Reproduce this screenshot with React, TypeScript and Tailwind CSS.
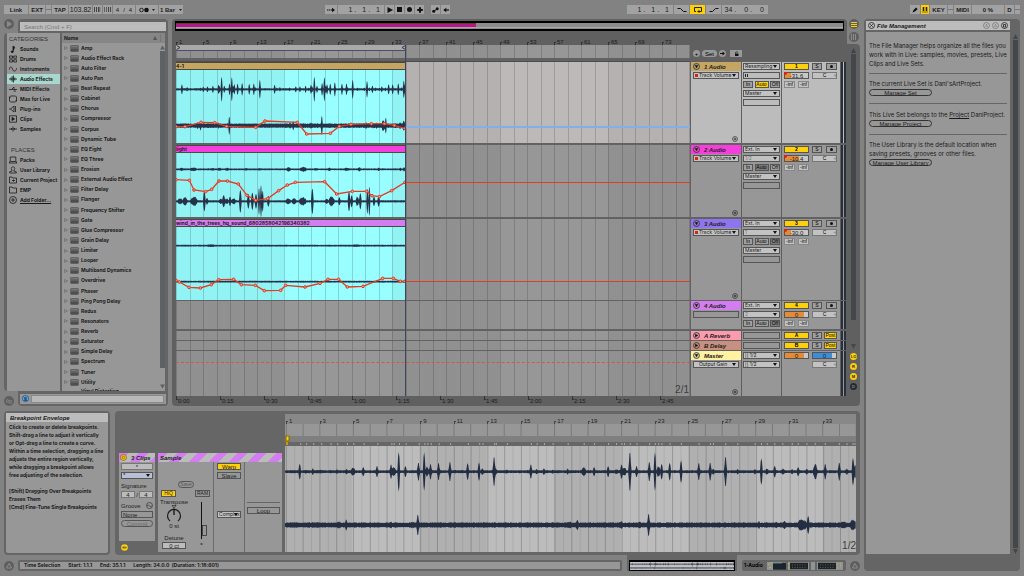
import React from "react";

type Pt = [number, number];
type Spike = [number, number, number?];

/* ---------- data ---------- */

const CATEGORIES = ["Sounds", "Drums", "Instruments", "Audio Effects", "MIDI Effects", "Max for Live", "Plug-ins", "Clips", "Samples"];
const PLACES = ["Packs", "User Library", "Current Project", "EMP", "Add Folder..."];
const DEVICES = [
  "Amp", "Audio Effect Rack", "Auto Filter", "Auto Pan", "Beat Repeat", "Cabinet", "Chorus", "Compressor", "Corpus",
  "Dynamic Tube", "EQ Eight", "EQ Three", "Erosion", "External Audio Effect", "Filter Delay", "Flanger",
  "Frequency Shifter", "Gate", "Glue Compressor", "Grain Delay", "Limiter", "Looper", "Multiband Dynamics", "Overdrive",
  "Phaser", "Ping Pong Delay", "Redux", "Resonators", "Reverb", "Saturator", "Simple Delay", "Spectrum", "Tuner", "Utility",
];
const BARS = Array.from({ length: 19 }, (_, i) => 1 + i * 4);
const TIMES = ["0:00", "0:15", "0:30", "0:45", "1:00", "1:15", "1:30", "1:45", "2:00", "2:15", "2:30", "2:45"];
const CLIP_BARS = Array.from({ length: 17 }, (_, i) => 1 + i * 2);

const EDIT_W = 1707;
const HITS: Spike[] = [
  [44, 24], [62, 6], [83, 10], [107, 6], [135, 5], [155, 7], [184, 8], [203, 13, 8], [234, 14], [275, 17], [317, 22], [324, 15, 8],
  [340, 60], [360, 17], [399, 28], [416, 58], [425, 15, 7], [435, 24], [459, 27], [493, 30], [546, 26], [580, 28], [590, 10],
  [625, 45], [630, 10, 7], [663, 6], [735, 22], [752, 8], [774, 10], [800, 6], [845, 9], [893, 14, 8], [924, 14], [966, 17],
  [990, 8, 8], [1006, 22], [1014, 14, 8], [1031, 60], [1051, 17], [1089, 30], [1106, 58], [1116, 16, 7], [1126, 24], [1150, 27],
  [1184, 34], [1237, 27], [1271, 28], [1280, 9], [1317, 46], [1353, 8], [1405, 8], [1424, 40], [1441, 9, 6], [1464, 18],
  [1488, 9, 6], [1516, 8], [1534, 14], [1560, 9], [1585, 24, 8], [1615, 24], [1657, 28], [1680, 9, 8], [1698, 42], [1704, 20, 9],
];
const BED: Spike[] = [
  [34, 8], [160, 11, 12], [183, 17], [316, 11, 6], [380, 9, 30], [397, 32], [470, 8, 60], [590, 8, 60], [660, 8], [724, 8],
  [850, 10, 12], [874, 16], [1006, 11, 6], [1060, 9, 30], [1087, 34], [1170, 8, 40], [1300, 8, 50], [1417, 12], [1468, 10],
  [1494, 11, 8], [1546, 18, 18], [1564, 28], [1670, 12, 14], [1698, 17, 12],
];
const LIGHT_TOP: Spike[] = [[16, 5, 9], [52, 6, 14], [110, 4, 8], [130, 5, 8], [153, 5, 8], [210, 4, 10], [250, 4, 8], [338, 8, 7], [382, 7, 14], [420, 4, 10], [460, 5, 6], [512, 5, 10], [550, 6, 7], [608, 5], [673, 5], [684, 6]];
const LIGHT_LOW: Spike[] = [
  [12, 10, 9], [27, 12, 9], [54, 15, 13], [85, 30], [93, 10], [134, 8, 7], [143, 18, 5], [152, 9, 7], [162, 14], [173, 10, 8],
  [193, 34], [217, 22], [229, 26], [240, 22], [249, 40, 3], [255, 48, 3], [260, 32, 3], [277, 16], [337, 10, 9], [354, 10, 9],
  [380, 12, 14], [409, 38], [452, 8, 7], [467, 16, 10], [490, 12], [519, 30], [527, 18], [544, 14, 6], [553, 24], [574, 38, 3], [580, 44, 3], [594, 14], [608, 16],
];

const AUTO_1: Pt[] = [[0, 170], [27, 170], [75, 157], [116, 158], [152, 169], [239, 172], [267, 153], [364, 157], [392, 192], [463, 190], [490, 169], [525, 163], [586, 161], [625, 161], [655, 166], [687, 175]];
const AUTO_2: Pt[] = [[0, 80], [40, 82], [54, 111], [89, 116], [107, 109], [129, 84], [154, 84], [187, 93], [213, 127], [239, 142], [275, 137], [308, 113], [334, 96], [358, 88], [446, 86], [482, 123], [529, 115], [572, 115], [588, 128], [610, 131], [647, 113], [687, 88]];
const AUTO_3: Pt[] = [[0, 160], [10, 165], [39, 181], [73, 183], [106, 173], [128, 158], [173, 157], [196, 173], [238, 175], [265, 191], [314, 190], [329, 175], [387, 180], [432, 169], [456, 157], [488, 157], [514, 180], [561, 178], [620, 154], [652, 154], [673, 163], [687, 163]];

/* ---------- drawing helpers ---------- */

function envelope(width: number, mid: number, base: number, spikes: Spike[], step = 2) {
  const top: string[] = [];
  const bottom: string[] = [];
  for (let x = 0; x <= width; x += step) {
    const n = Math.abs(Math.sin(x * 12.9898) * 43758.5453) % 1;
    let a = base * (0.8 + 0.4 * n);
    for (const [sx, amp, w = 4] of spikes) {
      const d = Math.abs(x - sx);
      if (d < w) a = Math.max(a, amp * (1 - (d / w) ** 2) * (w > 5 ? 0.7 + 0.4 * n : 1));
    }
    top.push(`${x},${(mid - a).toFixed(1)}`);
    bottom.unshift(`${x},${(mid + a).toFixed(1)}`);
  }
  return `M${top.join("L")}L${bottom.join("L")}Z`;
}

const scaled = (s: Spike[], kx: number, ky: number): Spike[] => s.map(([x, a, w = 4]) => [x * kx, a * ky, Math.max(3, w * kx)]);
const K = 687 / EDIT_W;

function Automation({ points }: { points: Pt[] }) {
  return (
    <g fill="none" stroke="#e23c22">
      <polyline points={points.map((p) => p.join(",")).join(" ")} strokeWidth="4" />
      {points.map(([x, y]) => <circle key={x} cx={x} cy={y} r="4" fill="#e8a08c" strokeWidth="3" />)}
    </g>
  );
}

const GRID =
  "bg-[repeating-linear-gradient(90deg,rgba(0,0,0,.16)_0_1px,transparent_1px_14px,rgba(0,0,0,.16)_14px_15px,transparent_15px_27px),repeating-linear-gradient(90deg,rgba(0,0,0,.045)_0_108px,transparent_108px_216px)]";
const STRIPES = "bg-[repeating-linear-gradient(135deg,#d37df0_0_7px,#bcbcbc_7px_14px)]";
const SMALL = "font-['Inter','Liberation_Sans',sans-serif] text-[5px]";

/* ---------- small controls ---------- */

const cell = "flex h-[7px] items-center justify-center border border-[#555] text-[5px] leading-none overflow-hidden whitespace-nowrap";

function Select({ label, value, className = "bg-[#c2c2c2]", dim = false, dot = false }: { label: string; value: string; className?: string; dim?: boolean; dot?: boolean }) {
  return (
    <span className={`relative flex h-[7px] items-center border border-[#555] ${className}`}>
      {dot && <i className="ml-px size-[3px] shrink-0 bg-[#e02010]" />}
      <select aria-label={label} className={`h-full w-full min-w-0 appearance-none bg-transparent pl-px leading-none ${SMALL} ${dim ? "text-[#777]" : "text-[#222]"}`}>
        <option>{value}</option>
      </select>
      <svg className="pointer-events-none absolute right-0.5 h-[3px] w-1" viewBox="0 0 4 3"><path d="M0 0h4L2 3z" fill="#111" /></svg>
    </span>
  );
}

function Top({ label, children, className = "" }: { label?: string; children?: React.ReactNode; className?: string }) {
  return (
    <button type="button" aria-label={label} className={`flex h-[9px] shrink-0 items-center justify-center bg-[#a2a2a2] text-[6px] leading-none font-bold ${className}`}>
      {children}
    </button>
  );
}

function Position({ label, values, className = "gap-1.5" }: { label: string; values: string[]; className?: string }) {
  return (
    <Top label={label} className={`w-[46px] justify-end pr-1 font-normal ${className}`}>
      {values.map((v, i) => <span key={i} className="text-[7px]">{v}</span>)}
    </Top>
  );
}

function Ring({ label, children, className = "" }: { label: string; children?: React.ReactNode; className?: string }) {
  return (
    <button type="button" aria-label={label} className={`flex size-[10px] shrink-0 items-center justify-center rounded-full bg-[#5f5f5f] ${className}`}>
      <svg viewBox="0 0 10 10" className="size-full" fill="none" stroke="#8b8b8b">{children}</svg>
    </button>
  );
}

/* ---------- header ---------- */

function Transport() {
  return (
    <header className="flex h-[19px] items-start gap-px px-1 pt-[5px] text-[#1c1c1c]">
      <Top className="w-6">Link</Top>
      <Top className="w-4">EXT</Top>
      <Top label="Sync" className="w-[5px] bg-[#949494]"><i className="h-px w-full bg-[#777]" /></Top>
      <Top className="w-4">TAP</Top>
      <Top label="Tempo" className="w-[23px] font-normal"><span className="text-[7px]">103.82</span></Top>
      <Top label="Nudge down" className="w-[9px]"><svg viewBox="0 0 9 5" className="h-[5px] w-[9px]"><path d="M1 0h1v5H1zM3 0h1v5H3zM5 0h1v5H5zM6.500 0h.7v5h-.7z" fill="#444" /></svg></Top>
      <Top label="Nudge up" className="w-[9px]"><svg viewBox="0 0 9 5" className="h-[5px] w-[9px]"><path d="M1 0h.7v5H1zM3 0h.7v5H3zM5 0h1v5H5zM7 0h1v5H7z" fill="#444" /></svg></Top>
      <Top label="Time signature" className="w-[22px] gap-1 font-normal"><span>4</span><span>/</span><span>4</span></Top>
      <Top label="Metronome" className="w-[22px] gap-1">
        <svg viewBox="0 0 16 6" className="h-[6px] w-4"><circle cx="2.500" cy="3" r="1.800" fill="none" stroke="#222" /><circle cx="7.500" cy="3" r="2.300" fill="#111" /><path d="M13 2h3l-1.500 2z" fill="#222" /></svg>
      </Top>
      <Top label="Quantization" className="w-6 gap-1">1 Bar<svg viewBox="0 0 3 2" className="h-[2px] w-[3px]"><path d="M0 0h3L1.500 2z" fill="#222" /></svg></Top>

      <div className="flex-[4_4_0%]" />
      <Top label="Follow" className="w-3"><svg viewBox="0 0 8 6" className="h-[6px] w-2"><path d="M0 3h5" stroke="#111" strokeDasharray="1.500 .5" /><path d="M5 .8 8 3 5 5.200z" fill="#111" /></svg></Top>
      <Position label="Arrangement position" values={["1 .", "1 .", "1"]} />
      <Top label="Play" className="w-[9px]"><svg viewBox="0 0 6 6" className="size-[6px]"><path d="M.5 0 6 3 .5 6z" fill="#111" /></svg></Top>
      <Top label="Stop" className="w-[9px]"><i className="size-[5px] bg-[#111]" /></Top>
      <Top label="Record" className="w-[9px]"><i className="size-[5px] rounded-full bg-[#111]" /></Top>
      <Top label="Overdub" className="mr-1.5 w-[9px]"><svg viewBox="0 0 6 6" className="size-[6px]"><path d="M3 .2v5.600M.2 3h5.600" stroke="#111" strokeWidth="2" /></svg></Top>
      <Top label="Automation arm" className="w-[9px]"><svg viewBox="0 0 7 6" className="h-[6px] w-[7px]"><path d="M1.500 4.500 5.500 1.500" stroke="#111" /><circle cx="1.700" cy="4.300" r="1.500" fill="#111" /><circle cx="5.200" cy="1.700" r="1.500" fill="#111" /></svg></Top>
      <Top label="Re-enable automation" className="w-[9px]"><svg viewBox="0 0 6 6" className="size-[6px]"><path d="M1 3h5" stroke="#111" strokeWidth="1.200" /><path d="M3.300 .8 .3 3l3 2.200z" fill="#111" /></svg></Top>

      <div className="flex-[5_5_0%]" />
      <Position label="Loop start" values={["1 .", "1 .", "1"]} />
      <Top label="Punch in" className="w-[15px]"><svg viewBox="0 0 10 6" className="h-[6px] w-[10px]"><path d="M.5 1.500h3l3 3h3" fill="none" stroke="#111" /></svg></Top>
      <Top label="Loop" className="w-[15px] bg-[#fdd00b]"><svg viewBox="0 0 10 6" className="h-[6px] w-[10px]"><path d="M3 4.500H1.500v-4h7v4H6" fill="none" stroke="#222" /><path d="M6.500 3v3L4 4.500z" fill="#222" /></svg></Top>
      <Top label="Punch out" className="w-[15px]"><svg viewBox="0 0 10 6" className="h-[6px] w-[10px]"><path d="M.5 4.500h3l3-3h3" fill="none" stroke="#111" /></svg></Top>
      <Position label="Loop length" values={["34 .", "0 .", "0"]} className="gap-2" />

      <div className="flex-[4_4_0%]" />
      <Top label="Draw mode" className="w-[10px]"><svg viewBox="0 0 6 6" className="size-[6px]"><path d="m.5 5.500 1-2.500L4 .5 5.700 2 3 4.500z" fill="#111" /></svg></Top>
      <Top label="Computer MIDI keyboard" className="w-2 bg-[#fdd00b]"><svg viewBox="0 0 6 6" className="size-[6px]"><path d="M0 0h6v6H0z" fill="#c29a10" /><path d="M1 0h1v4H1zM4 0h1v4H4z" fill="#222" /></svg></Top>
      <Top className="w-[17px]">KEY</Top>
      <Top label="Key activity" className="w-[5px] bg-[#949494]"><i className="h-px w-full bg-[#777]" /></Top>
      <Top className="w-[17px]">MIDI</Top>
      <Top label="CPU load" className="w-8">0 %</Top>
      <Top className="w-[9px]">D</Top>
      <Top label="MIDI activity" className="w-[5px] bg-[#949494]"><i className="h-px w-full bg-[#777]" /></Top>
    </header>
  );
}

/* ---------- browser ---------- */

const ICONS: Record<string, React.ReactNode> = {
  Sounds: <path d="M4 6.500V1l2 1.500M4 6a1 1 0 1 1-1.500 0z" fill="#111" />,
  Drums: <path d="M.5 1h3v2.200h-3zM4.700 1h3v2.200h-3zM.5 4.800h3V7h-3zM4.700 4.800h3V7h-3z" />,
  Instruments: <path d="M0 5C1 1 2.500 1 3.500 4S6.500 7 8 3" />,
  "Audio Effects": <path d="M0 4h8M2 2.500v3M3.200 1.200v5.600M4.500 .5v7M5.800 2.500v3" />,
  "MIDI Effects": <path d="M0 4.500h2.500L5 2M2.500 4.500H8M4.500 6h2.500M4 3h2" />,
  "Max for Live": <path d="M1.500 1h5l1 1v4l-1 1h-5l-1-1V2zM0 2.500h1.500M6.500 5.500H8" />,
  "Plug-ins": <path d="M5 1v6L1.500 4zM6.500 1v6M0 4h1.500" />,
  Clips: <><path d="M.5 .8h7v6.400h-7z" /><path d="M3 2.500 5.500 4 3 5.500z" fill="#111" /></>,
  Samples: <path d="M0 4h8M2.500 3v2M4 1.500v5M5.500 3v2" />,
  Packs: <path d="M1.200 1h5.600v4.500H1.200zM0 7h8M.5 5.500V7M7.500 5.500V7" />,
  "User Library": <path d="M4 .8a1.700 1.700 0 0 1 1.500 2.500L4.800 5l2.500.8V7H.7V5.800L3.200 5l-.7-1.700A1.700 1.700 0 0 1 4 .8z" />,
  "Current Project": <path d="M.5 7V1h2.500l.7 1h3.800v5zM3 4.500h3M4.500 3.500v2" />,
  EMP: <path d="M.5 7V1h2.500l.7 1h3.800v5z" />,
  "Add Folder...": <><circle cx="4" cy="4" r="3.500" /><path d="M4 2v4M2 4h4" /></>,
};

function NavItem({ name, active = false }: { name: string; active?: boolean }) {
  return (
    <button type="button" className={`flex h-[10px] w-full items-center gap-[3px] pl-0.5 text-left whitespace-nowrap ${SMALL} ${active ? "bg-[#a9d6cd]" : ""} ${name.startsWith("Add") ? "underline" : ""}`}>
      <svg viewBox="0 0 8 8" className="size-2 shrink-0" fill="none" stroke="#1c1c1c" strokeWidth=".8">{ICONS[name]}</svg>
      {name}
    </button>
  );
}

function Browser() {
  return (
    <nav className="flex w-[164px] shrink-0 flex-col font-bold text-[#1a1a1a]">
      <div className="flex">
        <div className="w-[14px]"><Ring label="Hide browser"><path d="M3.500 2.500 7.500 5l-4 2.500z" fill="#8b8b8b" /></Ring></div>
        <div className="min-w-0 flex-1 rounded-t-sm bg-[#656565] px-0.5 pt-[3px] pb-0.5">
          <input aria-label="Search" placeholder="Search (Cmd + F)" className="block h-[9px] w-full bg-[#bcbcbc] px-1 text-[6px] leading-none font-normal placeholder:text-[#777]" />
        </div>
      </div>
      <div className="flex min-h-0 flex-1 gap-0.5 rounded-l-sm bg-[#656565] pr-[3px] pl-[3px]">
        <div className="w-[53px] overflow-hidden bg-[#979797] leading-none">
          <h2 className="flex h-[11px] items-center pl-0.5 text-[6px] font-normal text-[#333]">CATEGORIES</h2>
          {CATEGORIES.map((n) => <NavItem key={n} name={n} active={n === "Audio Effects"} />)}
          <h2 className="mt-[10px] flex h-[11px] items-center pl-1 text-[6px] font-normal text-[#333]">PLACES</h2>
          {PLACES.map((n) => <NavItem key={n} name={n} />)}
        </div>
        <div className="flex min-w-0 flex-1 flex-col bg-[#979797] leading-none">
          <div className="flex h-[10px] items-center justify-between bg-[#868686] pl-0.5 text-[6px]">
            <span className={SMALL}>Name</span>
            <svg viewBox="0 0 12 8" className="h-2 w-3"><path d="M0 6h4L2 2z" fill="#555" /><path d="M7.500 0v8" stroke="#777" /></svg>
          </div>
          <div className="flex min-h-0 flex-1">
            <ul className={`flex min-w-0 flex-1 flex-col ${SMALL}`}>
              {DEVICES.map((d) => (
                <li key={d} className="flex flex-1 items-center gap-0.5 pl-0.5">
                  <svg viewBox="0 0 4 4" className="size-1" fill="none" stroke="#666" strokeWidth=".6"><path d="M.5 .5 3.500 2l-3 1.500z" /></svg>
                  <svg viewBox="0 0 9 7" className="h-[7px] w-[9px]"><rect x=".3" y=".3" width="8.400" height="6.400" rx="1" fill="#4e4e4e" /><path d="M1 .8h7v1.400H1z" fill="#777" /><path d="M0 3h9" stroke="#8a8a8a" strokeWidth=".6" /></svg>
                  {d}
                </li>
              ))}
              <li className="flex h-1 items-start overflow-hidden pl-[19px]"><span className="mt-0.5">Vinyl Distortion</span></li>
            </ul>
            <div className="flex w-[6px] flex-col items-center pt-0.5">
              <svg viewBox="0 0 5 5" className="size-[5px]"><path d="M0 4.500h5L2.500 .5z" fill="#5e6163" /></svg>
              <i className="mt-px w-[5px] flex-1 bg-[#5e6163]" />
              <svg viewBox="0 0 5 5" className="mt-4 mb-0.5 size-[5px]"><path d="M0 .5h5L2.500 4.500z" fill="#5e6163" /></svg>
            </div>
          </div>
        </div>
      </div>
      <div className="flex">
        <div className="w-[14px] pt-[5px]"><Ring label="Groove pool"><path d="M2 4.500q1.500-1.500 3 0t3 0M2 6.500q1.500-1.500 3 0t3 0" /></Ring></div>
        <div className="flex h-[15px] min-w-0 flex-1 items-center rounded-b-sm bg-[#656565] px-0.5">
          <div className="flex h-[10px] min-w-0 flex-1 items-center gap-0.5 bg-[#979797] px-0.5">
            <svg viewBox="0 0 8 8" className="size-[7px] shrink-0"><circle cx="4" cy="4" r="3.800" fill="#1d5c94" /><path d="M1.500 5V4a2.500 2.500 0 0 1 5 0v1M2 4v2M6 4v2" fill="none" stroke="#9cc6e8" strokeWidth=".8" /></svg>
            <input aria-label="Preview" className="h-2 min-w-0 flex-1 border border-[#8a8a8a] bg-[#b8b8b8]" />
          </div>
        </div>
      </div>
    </nav>
  );
}

/* ---------- tracks ---------- */

interface TrackInfo {
  name: string;
  title: string;
  tall: string;
  lane: string;
  panel: string;
  param: string;
  input?: string;
  channel?: string;
  mode?: string;
  out?: boolean;
  no: string;
  vol?: string;
  fill: number;
  add?: boolean;
  closed?: boolean;
  post?: boolean;
  master?: boolean;
}

function Fader({ label, value, fill, color = "#e58a35", flag = false }: { label: string; value: string; fill: number; color?: string; flag?: boolean }) {
  return (
    <span className="relative flex w-[25px]">
      <input aria-label={label} defaultValue={value} className="h-[7px] w-full min-w-0 border border-[#555] text-center text-[6px] leading-none text-[#222]" style={{ background: `linear-gradient(90deg, ${color} ${fill}%, #c8c8c8 ${fill}%)` }} />
      {flag && <svg className="absolute top-0 left-0 size-[3px]" viewBox="0 0 3 3"><path d="M0 0h3v2L1.500 3 0 2z" fill="#e02010" /></svg>}
    </span>
  );
}

const Pan = ({ label }: { label: string }) => (
  <button type="button" aria-label={label} className={`${cell} relative w-[25px] border-[#777] bg-[#c2c2c2]`}>
    C<svg className="absolute right-0 h-[3px] w-[3px]" viewBox="0 0 3 3"><path d="M3 0v3L0 1.500z" fill="#999" /></svg>
  </button>
);

function TrackHeader({ t }: { t: TrackInfo }) {
  return (
    <div className={`flex w-[155px] shrink-0 gap-px bg-[#5e5e5e] text-[6px] leading-none ${t.tall}`}>
      <div className={`flex w-[50px] flex-col ${t.panel}`}>
        <div className={`flex h-[9px] shrink-0 items-center gap-1 pl-0.5 font-bold text-[#222] italic ${t.title}`}>
          <button type="button" aria-label={`Unfold ${t.name}`} className="size-[7px]">
            <svg viewBox="0 0 7 7" className="size-[7px]"><circle cx="3.500" cy="3.500" r="3" fill="#8886" stroke="#222" strokeWidth=".7" /><path d={t.closed ? "M2.200 1.800v3.400l3-1.700z" : "M1.800 2.200h3.400L3.500 5.200z"} fill="#111" /></svg>
          </button>
          {t.name}
        </div>
        {!t.closed && (t.param
          ? <Select label={`${t.name} parameter`} value={t.param} dot={!t.master} className={`mx-0.5 mt-px shrink-0 bg-[#c2c2c2] ${t.master ? "pl-1" : ""}`} />
          : <div className="mx-0.5 mt-px h-[7px] border border-[#555]" />)}
        {t.add && (
          <button type="button" aria-label={`Add lane to ${t.name}`} className="mt-auto mr-[3px] mb-px self-end">
            <svg viewBox="0 0 7 7" className="size-[6px]" fill="none" stroke="#222"><circle cx="3.500" cy="3.500" r="2.900" strokeWidth=".7" /><path d="M3.500 2v3M2 3.500h3" strokeWidth=".9" /></svg>
          </button>
        )}
      </div>
      <div className={`flex w-[39px] flex-col gap-0.5 px-px pt-px ${t.panel}`}>
        {t.input ? <Select label={`${t.name} input type`} value={t.input} /> : <div className="h-[7px] border border-[#555]" />}
        {t.channel !== undefined && (t.channel === ""
          ? <div className="flex h-[7px] gap-px border border-[#555] p-px"><i className="w-px bg-[#222]" /><i className="w-px bg-[#222]" /></div>
          : <Select label={`${t.name} channel`} value={t.channel} dim={!t.master} />)}
        {t.mode && (
          <div className="flex justify-between">
            {["In", "Auto", "Off"].map((m) => (
              <button type="button" key={m} className={`${cell} px-px ${m === "Auto" ? "w-[14px]" : "w-[10px]"} ${m === t.mode ? (t.panel === "bg-[#bcbcbc]" ? "bg-[#fdd00b]" : "bg-[#7c7c7c]") : "bg-[#a0a0a0]"}`}>{m}</button>
            ))}
          </div>
        )}
        {t.out && <><Select label={`${t.name} output`} value="Master" /><div className="h-[7px] border border-[#555]" /></>}
      </div>
      <div className={`grid w-[58px] auto-rows-[7px] grid-cols-[25px_25px] content-start gap-x-[3px] gap-y-0.5 pt-px pl-0.5 ${t.panel}`}>
        {t.master ? (
          <>
            <Fader label="Master volume" value="0" fill={84} />
            <Fader label="Cue volume" value="0" fill={84} color="#3b8ed6" />
            <span /><Pan label="Master pan" />
          </>
        ) : (
          <>
            <button type="button" aria-label={`${t.name} activator`} className={`${cell} bg-[#fdd00b] font-bold`}>{t.no}</button>
            <div className="flex justify-between">
              <button type="button" aria-label={`Solo ${t.name}`} className={`${cell} w-[10px] bg-[#a0a0a0]`}>S</button>
              {t.post
                ? <button type="button" className={`${cell} w-[13px] bg-[#fdd00b]`}>Post</button>
                : <button type="button" aria-label={`Arm ${t.name}`} className={`${cell} w-[11px] bg-[#a0a0a0]`}><i className="size-[3px] rounded-full bg-[#111]" /></button>}
            </div>
            {t.vol && (
              <>
                <Fader label={`${t.name} volume`} value={t.vol} fill={t.fill} flag={t.vol !== "0"} />
                <Pan label={`${t.name} pan`} />
                <div className="flex justify-between">
                  {["A", "B"].map((s) => <button type="button" key={s} aria-label={`${t.name} send ${s}`} className={`${cell} w-[11px] border-[#888] bg-[#c2c2c2]`}>-inf</button>)}
                </div>
              </>
            )}
          </>
        )}
      </div>
      <div className={`flex w-[5px] gap-px ${t.panel}`}><i className="w-0.5 bg-[#28303b]" /><i className="w-0.5 bg-[#28303b]" /></div>
    </div>
  );
}

function Clip({ name, color, children, height }: { name: string; color: string; children: React.ReactNode; height: number }) {
  return (
    <div className="flex w-[230px] shrink-0 flex-col border-r border-[#2a3a50]">
      <div className={`h-2 shrink-0 overflow-hidden border-y border-[#4a4a40] leading-[6px] font-bold whitespace-nowrap text-[#222] ${SMALL} ${color}`}>{name}</div>
      <div className={`min-h-0 flex-1 bg-[#98feff] ${GRID}`}>
        <svg viewBox={`0 0 687 ${height}`} preserveAspectRatio="none" className="size-full" fill="#26324a">{children}</svg>
      </div>
    </div>
  );
}

function Track({ t, clip, line, gap = "pb-px" }: { t: TrackInfo; clip?: React.ReactNode; line?: string; gap?: string }) {
  return (
    <div className={`flex gap-px bg-[#626262] ${gap}`}>
      <div className={`relative flex min-w-0 flex-1 overflow-hidden ${t.lane} ${GRID}`}>
        {clip}
        {line && <div className="flex-1"><div className={line} /></div>}
        {t.master && <span className="absolute right-px bottom-px text-[10px] leading-none text-[#3c3c3c]">2/1</span>}
      </div>
      <TrackHeader t={t} />
    </div>
  );
}

const GREY = { lane: "bg-[#979797]", panel: "bg-[#979797]" };
const T: Record<string, TrackInfo> = {
  one: { name: "1 Audio", title: "bg-[#c4a561]", tall: "h-[81px]", lane: "bg-[#bcb9b8]", panel: "bg-[#bcbcbc]", param: "Track Volume", input: "Resampling", channel: "", mode: "Auto", out: true, no: "1", vol: "-31.6", fill: 24, add: true },
  two: { ...GREY, name: "2 Audio", title: "bg-[#f53fdc]", tall: "h-[72px]", param: "Track Volume", input: "Ext. In", channel: "1/2", mode: "Auto", out: true, no: "2", vol: "-10.4", fill: 60, add: true },
  three: { ...GREY, name: "3 Audio", title: "bg-[#8f74ef]", tall: "h-[81px]", param: "Track Volume", input: "Ext. In", channel: "1", mode: "Off", out: true, no: "3", vol: "-30.0", fill: 24, add: true },
  four: { ...GREY, name: "4 Audio", title: "bg-[#d37df0]", tall: "h-[28px]", param: "", input: "Ext. In", channel: "2", mode: "Off", no: "4", vol: "0", fill: 84 },
  a: { ...GREY, name: "A Reverb", title: "bg-[#fb9bad]", tall: "h-[9px]", param: "", no: "A", fill: 0, closed: true, post: true },
  b: { ...GREY, name: "B Delay", title: "bg-[#c79080]", tall: "h-[9px]", param: "", no: "B", fill: 0, closed: true, post: true },
  master: { ...GREY, name: "Master", title: "bg-[#fff2a0]", tall: "h-[45px]", param: "Output Gain", input: "|| 1/2", channel: "|| 1/2", no: "", fill: 0, add: true, master: true },
};

function Arrangement() {
  return (
    <section className="flex min-w-0 flex-1">
      <div className="flex min-w-0 flex-1 flex-col rounded-l-sm rounded-tr-sm bg-[#606060] pt-0.5 pr-px pb-px">
        <div className="mr-0.5 ml-[3px] flex h-[10px] flex-col border-2 border-x border-black bg-[#8c8c8c]">
          <i className="h-px w-[45%] bg-[#5c4412]" />
          <i className="h-[3px] w-[45%] bg-[#b8148e]" />
          <i className="h-px w-full bg-[#a8a8a8]" />
        </div>
        <div className="relative ml-1 flex flex-1 flex-col">
          <div className="flex gap-px">
            <div className="min-w-0 flex-1">
              <div className="flex h-[14px] items-end overflow-hidden text-[6px] leading-none text-[#1c1c1c]">
                {BARS.map((b) => (
                  <span key={b} className="flex w-[27px] shrink-0 items-end gap-px"><i className="h-[3px] w-0.5 border-t border-l border-[#333]" />{b}</span>
                ))}
              </div>
              <div className={`flex h-[6px] bg-[#979797] ${GRID}`}>
                <div className="flex w-[230px] items-center justify-between border-b border-[#4a4f68] bg-[#a9a9a9]">
                  <svg viewBox="0 0 5 5" className="size-[5px]" fill="none" stroke="#333a50"><path d="M.5 .5 4 2.500l-3.500 2" /></svg>
                  <svg viewBox="0 0 5 5" className="size-[5px]" fill="none" stroke="#333a50"><path d="M4.500 .5 1 2.500l3.500 2z" /></svg>
                </div>
              </div>
              <div className={`h-[7px] bg-[#979797] ${GRID}`} />
              <div className="h-1 border-b border-[#4d4d4d] bg-[#626262]" />
            </div>
            <div className="flex w-[155px] items-start gap-0.5 pt-[19px] pl-0.5 text-[6px] leading-none">
              <button type="button" aria-label="Previous locator" className="flex size-[7px] items-center justify-center rounded-full bg-[#999]">+</button>
              <button type="button" className="flex h-[7px] w-[15px] items-center justify-center rounded-full bg-[#999]">Set</button>
              <button type="button" aria-label="Next locator" className="flex size-[7px] items-center justify-center rounded-full bg-[#999]"><svg viewBox="0 0 5 5" className="size-[5px]"><path d="M0 2.500h3" stroke="#111" /><path d="m2.500 .5 2.500 2-2.500 2z" fill="#111" /></svg></button>
              <button type="button" aria-label="Lock envelopes" className="ml-0.5 flex h-[7px] w-3 items-center justify-center bg-[#999]"><svg viewBox="0 0 5 5" className="size-[5px]"><path d="M1 2.500h3.500V5H1z" fill="#111" /><path d="M1.500 2.500V1.500q1.200-1.500 2.400 0" fill="none" stroke="#111" strokeWidth=".7" /></svg></button>
            </div>
          </div>

          <Track t={T.one} gap="pb-0.5" line="mt-[64px] h-0.5 bg-[#7fb0ea]" clip={
            <Clip name="4-1" color="bg-[#c4a561]" height={219}>
              <path d={envelope(687, 58, 3, scaled(HITS, K, 0.62), 1)} />
              <path d={envelope(687, 167, 6, scaled(BED, K, 0.85), 1)} />
              <Automation points={AUTO_1} />
            </Clip>
          } />
          <Track t={T.two} gap="pb-0.5" line="mt-[37px] h-px bg-[#e23c22]" clip={
            <Clip name="light" color="bg-[#f53fdc]" height={192}>
              <path d={envelope(687, 49, 2.5, LIGHT_TOP, 1)} />
              <path d={envelope(687, 145, 3, LIGHT_LOW, 1)} />
              <Automation points={AUTO_2} />
            </Clip>
          } />
          <Track t={T.three} line="mt-[62px] h-px bg-[#e23c22]" clip={
            <Clip name="wind_in_the_trees_hq_sound_6802858042196340382" color="bg-[#d37df0]" height={219}>
              <path d={envelope(687, 56, 2.5, [[105, 4, 20], [540, 4, 20]], 1)} />
              <path d={envelope(687, 164, 2.5, [], 1)} />
              <Automation points={AUTO_3} />
            </Clip>
          } />
          <Track t={T.four} gap="pb-0.5" />
          <Track t={T.a} />
          <Track t={T.b} />
          <Track t={T.master} gap="pb-0" line="mt-[11px] border-t border-dashed border-[#d0584a]" />

          <div className="flex h-[9px] overflow-hidden text-[6px] leading-none text-[#1c1c1c]">
            {TIMES.map((s) => (
              <span key={s} className="flex w-[44px] shrink-0 items-center"><i className="h-1 w-0.5 self-start border-b border-l border-[#333]" />{s}</span>
            ))}
          </div>
          <i className="absolute top-[14px] bottom-[9px] left-[229px] w-px bg-[#3c4660]" />
        </div>
      </div>
      <div className="flex w-[13px] shrink-0 flex-col">
        <div className="flex flex-col items-center gap-[3px] pb-0.5">
          <Ring label="Arrangement view"><path d="M2 3h6v1H2zM2 5h6v1H2zM2 7h6v1H2z" fill="#f8d010" stroke="none" /></Ring>
          <Ring label="Session view"><path d="M2 2h1v6H2zM4 2h1v6H4zM6 2h1v6H6z" fill="#8b8b8b" stroke="none" /></Ring>
        </div>
        <div className="flex flex-1 flex-col items-center rounded-r-sm bg-[#606060] pt-1">
          <svg viewBox="0 0 5 5" className="size-[5px]"><path d="M0 5h5L2.500 0z" fill="#3f4246" /></svg>
          <i className="mt-px h-[266px] w-[5px] bg-[#43474b]" />
          <svg viewBox="0 0 5 5" className="mt-6 mb-1 size-[5px]"><path d="M0 0h5L2.500 5z" fill="#43474b" /></svg>
          <div className="flex flex-col gap-[3px] text-[4px] leading-none font-bold">
            {["I-O", "R", "M", "D"].map((s) => (
              <button type="button" key={s} className={`flex size-[7px] items-center justify-center rounded-full ${s === "D" ? "bg-[#262b31] text-[#888]" : "bg-[#fdd00b] text-[#222]"}`}>{s}</button>
            ))}
          </div>
        </div>
      </div>
    </section>
  );
}

/* ---------- clip view ---------- */

const pill = "flex h-[7px] items-center justify-center rounded-full border border-[#555] leading-none";

function ClipView() {
  return (
    <section className="flex min-w-0 flex-1 items-stretch rounded-sm bg-[#666] py-[3px] pr-1 pl-1 text-[6px] leading-none text-[#222]">
      <div className="flex w-9 shrink-0 flex-col pt-[39px]">
        <h2 className={`flex h-[9px] items-center gap-1 pl-px font-bold italic ${STRIPES}`}>
          <svg viewBox="0 0 7 7" className="size-[7px]"><circle cx="3.500" cy="3.500" r="3" fill="#f5c518" stroke="#6a5510" strokeWidth=".6" /><circle cx="3.500" cy="3.500" r="1.200" fill="none" stroke="#6a5510" strokeWidth=".6" /></svg>
          3 Clips
        </h2>
        <div className="flex h-[79px] flex-col bg-[#979797] px-0.5 pt-px">
          <input aria-label="Clip name" defaultValue="*" className="h-[7px] w-full border border-[#777] bg-[#bcbcbc] text-center" />
          <Select label="Clip color" value="*" className="mt-0.5 bg-[#b9bfd4]" />
          <span className="mt-1">Signature</span>
          <div className="mt-0.5 flex items-center justify-between">
            <input aria-label="Signature numerator" defaultValue="4" className="h-[7px] w-[14px] border border-[#777] bg-[#bcbcbc] text-center" />/
            <input aria-label="Signature denominator" defaultValue="4" className="h-[7px] w-[14px] border border-[#777] bg-[#bcbcbc] text-center" />
          </div>
          <div className="mt-1 flex items-center justify-between">Groove
            <svg viewBox="0 0 7 7" className="size-[7px]" fill="none" stroke="#333" strokeWidth=".7"><circle cx="3.500" cy="3.500" r="3" /><path d="M1 3.800q1.200-1.500 2.500 0t2.500 0" /></svg>
          </div>
          <button type="button" className="mt-0.5 flex h-[7px] items-center border border-[#555] pl-px">None</button>
          <button type="button" className={`${pill} mt-0.5 text-[#666]`}>Commit</button>
        </div>
        <svg viewBox="0 0 8 8" className="mt-[3px] ml-0.5 size-[7px]"><circle cx="4" cy="4" r="3.800" fill="#fdd00b" /><path d="M1.500 4h1.200M5.300 4h1.200M2.700 3v2M3.700 2.500v3M5.300 3v2" stroke="#333" strokeWidth=".7" /></svg>
      </div>

      <div className="ml-[3px] flex w-[124px] shrink-0 flex-col pt-[39px]">
        <h2 className={`flex h-[9px] shrink-0 items-center pl-0.5 font-bold italic ${STRIPES}`}>Sample</h2>
        <div className="flex flex-1 gap-px bg-[#6c6c6c]">
          <div className="flex w-[55px] flex-col bg-[#979797] px-[3px] pt-[19px]">
            <button type="button" className={`${pill} ml-[17px] w-4 text-[5px] text-[#555]`}>Save</button>
            <div className="mt-0.5 flex justify-between">
              <button type="button" className={`${cell} w-[15px] bg-[#fdd00b]`}>HiQ</button>
              <button type="button" className={`${cell} w-[15px]`}>RAM</button>
            </div>
            <div className="mt-0.5 flex justify-between">
              <div className="flex w-[26px] flex-col items-center whitespace-nowrap">
                <span>Transpose</span>
                <svg viewBox="0 0 18 18" className="size-[18px]" fill="none" stroke="#1a1a1a"><path d="M7 .5h4L9 3z" strokeWidth=".6" /><path d="M5 16A6.500 6.500 0 1 1 13 16" strokeWidth="1.200" /><path d="M9 3.500V10" strokeWidth="1.400" /></svg>
                <span>0 st</span>
                <span className="mt-1.5">Detune</span>
                <button type="button" aria-label="Detune" className="mt-px flex h-[7px] w-6 items-center justify-center border border-[#555] bg-[#bcbcbc]">0 ct</button>
              </div>
              <svg viewBox="0 0 12 48" className="mt-[3px] h-12 w-3"><path d="M3.500 0v37M2.500 42h2" stroke="#111" /><rect x="4.500" y="23.500" width="4" height="10" fill="#979797" stroke="#333" strokeWidth=".8" /></svg>
            </div>
          </div>
          <div className="flex w-[30px] flex-col bg-[#979797] px-[3px] pt-px">
            <button type="button" className="flex h-[7px] items-center justify-center border border-[#555] bg-[#fdd00b]">Warp</button>
            <button type="button" className="mt-0.5 flex h-[7px] items-center justify-center border border-[#555]">Slave</button>
            <Select label="Warp mode" value="Complex" className="mt-[32px] bg-[#c2c2c2]" />
          </div>
          <div className="flex flex-1 flex-col bg-[#979797] px-0.5 pt-[40px]">
            <i className="h-px bg-[#666]" />
            <button type="button" className="mt-1 flex h-[7px] items-center justify-center border border-[#555]">Loop</button>
          </div>
        </div>
      </div>

      <div className="ml-[3px] flex min-w-0 flex-1 flex-col bg-[#888]">
        <div className="flex h-[10px] items-end pl-px">
          {CLIP_BARS.map((b) => <span key={b} className="flex min-w-0 flex-1 items-end gap-px"><i className="h-[3px] w-0.5 border-t border-l border-[#444]" />{b}</span>)}
        </div>
        <svg viewBox="0 0 1710 66" preserveAspectRatio="none" className="h-[22px] w-full">
          <path d="M0 0h1710v36H0z" fill="#979797" />
          {Array.from({ length: 35 }, (_, i) => <path key={i} d={`M${4 + i * 50.2} 0v36`} stroke="#6d6d6d" strokeWidth="2" />)}
          <path d="M0 36h1710v18H0z" fill="#7f7f7f" />
          <path d="M0 54h1710v12H0z" fill="#666" />
          {HITS.map(([x]) => <path key={x} d={`M${x + 3} 57v6`} stroke="#aaa" strokeWidth="3" />)}
          <path d="M3 36h9v15H3z" fill="#fdd00b" stroke="#8a6c00" strokeWidth="3" />
          <path d="M3 54h6v9H3z" fill="#c59c10" />
        </svg>
        <div className="relative min-h-0 flex-1">
          <svg viewBox={`0 0 ${EDIT_W} 318`} preserveAspectRatio="none" className="absolute inset-0 size-full bg-[#bcbcbc]">
            {[0, 2, 4, 6, 8].map((i) => <rect key={i} x={i * 201} y="0" width="201" height="320" fill="#b0b0b0" />)}
            {Array.from({ length: 68 }, (_, i) => <path key={i} d={`M${4 + i * 25.1} 0v320`} stroke="#000" strokeOpacity={i % 2 ? 0.08 : 0.2} strokeWidth="3" />)}
            <path d={envelope(EDIT_W, 77, 4, HITS)} fill="#242e42" />
            <path d={envelope(EDIT_W, 237, 7, BED)} fill="#242e42" />
          </svg>
          <span className="absolute right-0 bottom-px text-[10px] leading-none text-[#3c3c3c]">1/2</span>
        </div>
      </div>
    </section>
  );
}

/* ---------- help, status, file panel ---------- */

function InfoBox() {
  return (
    <section className="flex w-[106px] shrink-0 flex-col rounded-sm border-2 border-[#656565] bg-[#979797] font-bold text-[#1a1a1a]">
      <h2 className="flex h-[9px] items-center bg-[#bcbcbc] pl-1 text-[6px] leading-none italic">Breakpoint Envelope</h2>
      <p className={`pt-px pl-[3px] leading-[8px] whitespace-nowrap ${SMALL}`}>
        Click to create or delete breakpoints.<br />Shift-drag a line to adjust it vertically<br />or Opt-drag a line to create a curve.<br />
        Within a time selection, dragging a line<br />adjusts the entire region vertically,<br />while dragging a breakpoint allows<br />
        free adjusting of the selection.<br /><br />[Shift] Dragging Over Breakpoints<br />Erases Them<br />[Cmd] Fine-Tune Single Breakpoints
      </p>
    </section>
  );
}

function StatusBar() {
  return (
    <footer className="flex h-[11px] items-center">
      <div className="w-[14px]"><Ring label="Help view"><path d="M5 2.500 7.500 7h-5z" /></Ring></div>
      <p className={`flex h-[11px] flex-1 items-center gap-2 rounded-xs border-2 border-[#656565] bg-[#979797] pl-1 leading-none font-bold whitespace-nowrap text-[#1a1a1a] ${SMALL}`}>
        <span>Time Selection</span><span>Start: 1.1.1</span><span>End: 35.1.1</span><span>Length: 34.0.0&nbsp; (Duration: 1:18:601)</span>
      </p>
      <div className="-mt-[5px] ml-[5px] self-stretch bg-[#666] px-0.5 pt-[5px]">
        <svg viewBox={`0 0 ${EDIT_W} 150`} preserveAspectRatio="none" className="h-[11px] w-[106px] border border-t-2 border-black bg-[#c2c2c2]" fill="#242e42">
          <path d={envelope(EDIT_W, 40, 8, HITS)} />
          <path d={envelope(EDIT_W, 112, 8, BED)} />
        </svg>
      </div>
      <div className={`ml-[5px] flex h-[11px] w-[104px] items-center rounded-xs bg-[#656565] pl-0.5 leading-none font-bold whitespace-nowrap ${SMALL}`}>
        <span className="w-[22px]">1-Audio</span>
        <svg viewBox="0 0 78 8" className="h-2 w-[78px]">
          <path d="M1 0h19v8H1zM22 0h21v8H22zM45 0h4v8h-4zM51 0h26v8H51z" fill="#8f9492" />
          <path d="M7 .8h13v7H7zM24 .8h18v6.500H24zM52 .8h18v6.500H52z" fill="#1c242e" />
          <path d="M26 3h14M26 5.500h14M54 3h14M54 5.500h14" stroke="#8a6a30" strokeWidth=".7" strokeDasharray="1 1.500" />
          <path d="M2 2h1.500M3.500 5.500H5M22.500 1v1.500M22.500 5v1.500M71 2h1M74 4h1M71 6h1M74 2h1" stroke="#e0b020" />
          <path d="M4 1h12" stroke="#8cc4b8" strokeWidth=".6" />
        </svg>
      </div>
      <Ring label="Detail view" className="ml-1"><path d="M5 2.500 7.500 7h-5z" /></Ring>
    </footer>
  );
}

const manage = "mt-px flex h-[7px] w-[63px] items-center justify-center rounded-full border border-[#333] font-['Liberation_Sans',sans-serif] leading-none";

function FilePanel() {
  return (
    <aside className="flex w-[156px] shrink-0 flex-col rounded-sm bg-[#656565] pt-0.5 pr-0.5 pb-[17px] pl-0.5 text-[6px] text-[#1a1a1a]">
      <div className="mr-2 flex h-[9px] items-center gap-0.5 bg-[#bcbcbc] px-0.5 leading-none">
        <button type="button" aria-label="Close panel"><svg viewBox="0 0 7 7" className="size-[7px]" fill="none" stroke="#222" strokeWidth=".8"><circle cx="3.500" cy="3.500" r="3" /><path d="m2.200 2.200 2.600 2.600M4.800 2.200 2.200 4.800" /></svg></button>
        <h2 className="flex-1 font-bold italic">File Management</h2>
        {["M2 4h3M3 2.500h1", "M2 4h3M3 2.500h1", "M2.500 2.500h2V5h-2z"].map((d, i) => (
          <button type="button" key={i} aria-label={["Back", "Forward", "Home"][i]}><svg viewBox="0 0 7 7" className="size-[7px]" fill="none" stroke={i === 2 ? "#222" : "#777"} strokeWidth=".8"><circle cx="3.500" cy="3.500" r="3" /><path d={d} /></svg></button>
        ))}
      </div>
      <div className="mt-0.5 flex flex-1 gap-0.5">
        <div className="flex-1 bg-[#979797] px-[3px] pt-[9px] font-['Inter','Liberation_Sans',sans-serif] leading-[9px] whitespace-nowrap">
          <p>The File Manager helps organize all the files you<br />work with in Live: samples, movies, presets, Live<br />Clips and Live Sets.</p>
          <hr className="my-[5px] border-[#666]" />
          <p>The current Live Set is Dani'sArtProject.</p>
          <button type="button" className={manage}>Manage Set</button>
          <hr className="mt-[7px] mb-1.5 border-[#666]" />
          <p>This Live Set belongs to the <a href="#project" className="underline">Project</a> DaniProject.</p>
          <button type="button" className={manage}>Manage Project</button>
          <hr className="mt-[7px] mb-[5px] border-[#666]" />
          <p>The User Library is the default location when<br />saving presets, grooves or other files.</p>
          <button type="button" className={manage}>Manage User Library</button>
        </div>
        <div className="flex w-[6px] flex-col items-center pt-0.5">
          <svg viewBox="0 0 5 5" className="size-[5px]"><path d="M0 5h5L2.500 0z" fill="#43474b" /></svg>
          <i className="my-px w-[5px] flex-1 bg-[#43474b]" />
          <svg viewBox="0 0 5 5" className="size-[5px]"><path d="M0 0h5L2.500 5z" fill="#43474b" /></svg>
        </div>
      </div>
    </aside>
  );
}

export default function App() {
  return (
    <div className="flex min-h-screen flex-col bg-[#828282] font-['Liberation_Sans',Arial,sans-serif]">
      <Transport />
      <main className="flex flex-1 gap-1 px-1 pb-[5px]">
        <div className="flex min-w-0 flex-1 flex-col gap-[5px]">
          <div className="flex gap-1">
            <Browser />
            <Arrangement />
          </div>
          <div className="flex flex-1 gap-[5px]">
            <InfoBox />
            <ClipView />
          </div>
          <StatusBar />
        </div>
        <FilePanel />
      </main>
    </div>
  );
}
